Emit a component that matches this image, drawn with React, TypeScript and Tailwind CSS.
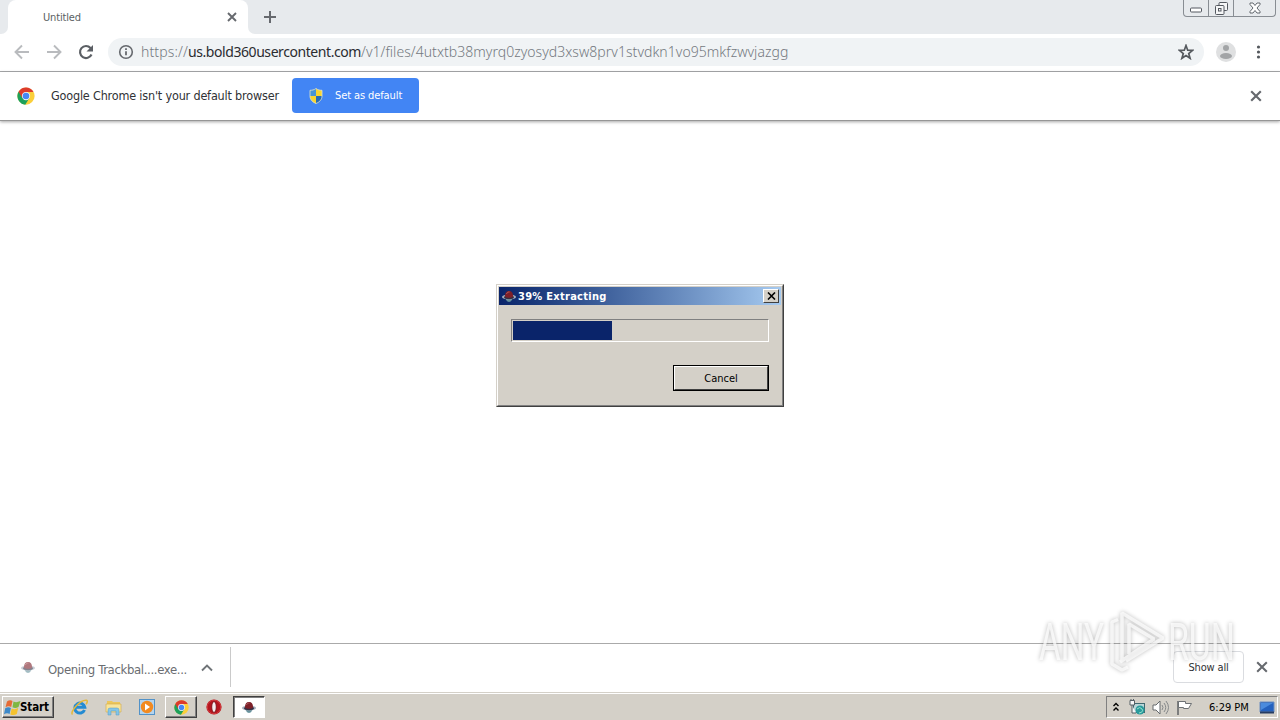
import React from 'react';

const ui = "font-['DejaVu_Sans_Condensed','DejaVu_Sans',sans-serif] [font-stretch:condensed]";
const light = "font-['Noto_Sans','Open_Sans',sans-serif]";

function ChromeLogo({ size }: { size: number }) {
  return (
    <svg width={size} height={size} viewBox="0 0 48 48">
      <circle cx="24" cy="24" r="23" fill="#fbcf3a" />
      <path d="M4.100 12.500A23 23 0 0 0 22 47L33 29.500 24 24z" fill="#1da15a" />
      <path d="M4.100 12.500A23 23 0 0 1 44 13H24L14 29.500z" fill="#dc3b2c" />
      <circle cx="24" cy="24" r="11" fill="#f3f6fb" />
      <circle cx="24" cy="24" r="8.800" fill="#4587f4" />
    </svg>
  );
}

function HatIcon({ faded = false }: { faded?: boolean }) {
  return (
    <svg width="16" height="16" viewBox="0 0 16 16" className={faded ? 'opacity-60' : ''}>
      <path d="M4 10h8l-2 3.200L8 14l-2-.8z" fill="#66929c" />
      <ellipse cx="8" cy="9" rx="7" ry="2.400" fill="#a5aebc" />
      <ellipse cx="8" cy="9.300" rx="5" ry="1.900" fill="#343044" />
      <path d="M4 8.500C4 4.500 5.500 3 8 3s4 1.500 4 5.500c-1.500 1.700-6.500 1.700-8 0z" fill="#7d2029" />
      <path d="M5.500 6C6 4.500 7 4 8.500 4" stroke="#b4605f" fill="none" />
    </svg>
  );
}

function Cross({ size, w = 2 }: { size: number; w?: number }) {
  return (
    <svg width={size} height={size} viewBox="0 0 10 10" stroke="#66696e" strokeWidth={w} fill="none">
      <path d="M1 1l8 8M9 1 1 9" />
    </svg>
  );
}

function Watermark() {
  return (
    <svg
      className="absolute left-[1030px] top-[602px] font-['Roboto','Liberation_Sans',sans-serif] text-[51px] drop-shadow-[0_0_2px_rgba(0,0,0,0.36)]"
      width="212" height="76" viewBox="0 0 212 76" fill="none" strokeLinejoin="bevel"
    >
      <text x="9" y="58" textLength="65" lengthAdjust="spacingAndGlyphs" fill="#fff" fillOpacity=".75">ANY</text>
      <text x="138" y="58" textLength="67" lengthAdjust="spacingAndGlyphs" fill="#fff" fillOpacity=".75">RUN</text>
      <path d="M88 17.500 82 20v42l10 6 6-3M92 58V11l41 25-37 23M99 52V22l25 15-34 23" stroke="#fff" strokeOpacity=".72" strokeWidth="3.500" />
    </svg>
  );
}

function TitleStrip() {
  return (
    <div className="relative flex h-[34px] bg-[#e7eaed]">
      <div className="h-[34px] w-2 bg-white"><div className="h-full rounded-br-[7px] bg-[#e7eaed]" /></div>
      <div className="flex h-[34px] w-[240px] items-center rounded-t-[8px] bg-white pl-[35px] pr-[11px]">
        <span className={`${ui} flex-1 pt-[2px] text-[11px] tracking-[-0.15px] text-[#5b5f63]`}>Untitled</span>
        <Cross size={10} w={1.9} />
      </div>
      <div className="h-[34px] w-2 bg-white"><div className="h-full rounded-bl-[7px] bg-[#e7eaed]" /></div>
      <svg className="ml-[7px] mt-[10px]" width="14" height="14" viewBox="0 0 14 14" stroke="#66696e" strokeWidth="2">
        <path d="M7 1v12M1 7h12" />
      </svg>
      <div className="ml-auto mr-1 flex h-[17px] w-[93px] rounded-b-[4px] border border-t-0 border-[#888d93]">
        <div className="flex w-[25px] justify-center border-r border-[#888d93] pt-[7px]">
          <svg width="12" height="6" viewBox="0 0 12 6"><rect x=".5" y="1" width="11" height="4" rx="1" fill="#fff" stroke="#545960" /></svg>
        </div>
        <div className="flex w-[25px] justify-center border-r border-[#888d93] pt-[2px]">
          <svg width="13" height="13" viewBox="0 0 13 13" fill="#f5f6f7" stroke="#545960">
            <rect x="4" y=".5" width="8.500" height="8" rx="1" /><rect x=".5" y="3.500" width="8.500" height="9" rx="1" /><rect x="3.500" y="6.500" width="2.500" height="2.500" />
          </svg>
        </div>
        <div className="flex flex-1 justify-center pt-[2px]">
          <svg width="12" height="12" viewBox="0 0 12 12"><path d="M1 1h3l2 2.500L8 1h3v1.500L8 6l3 3.500V11H8L6 8.500 4 11H1V9.500L4 6 1 2.500z" fill="#fff" stroke="#545960" strokeWidth=".9" /></svg>
        </div>
      </div>
    </div>
  );
}

function Toolbar() {
  return (
    <div className="flex h-[38px] items-center border-b border-[#a9abad] bg-white pb-px pl-[14px]">
      <svg width="16" height="16" viewBox="0 0 16 16" fill="none" stroke="#b9bbbe" strokeWidth="1.900"><path d="M15 8H2M8 1.500 1.500 8 8 14.500" /></svg>
      <svg className="ml-4" width="16" height="16" viewBox="0 0 16 16" fill="none" stroke="#b9bbbe" strokeWidth="1.900"><path d="M1 8h13M8 1.500 14.500 8 8 14.500" /></svg>
      <svg className="ml-4" width="16" height="16" viewBox="0 0 16 16" fill="none"><path d="M13.500 10.500A6 6 0 1 1 12.500 4L14 5.700" stroke="#5b5f64" strokeWidth="2.200" /><path d="M15 1v6.500H8.500z" fill="#5b5f64" /></svg>
      <div className="ml-[14px] flex h-[28px] w-[1096px] items-center rounded-full bg-[#f0f3f5] pl-[10px] pr-[10px]">
        <svg width="16" height="16" viewBox="0 0 16 16" fill="none" stroke="#66696e" strokeWidth="1.600"><circle cx="8" cy="8" r="6.300" /><path d="M8 7.200v4M8 4.300v1.600" strokeWidth="1.800" /></svg>
        <span className={`${light} ml-[7px] flex-1 whitespace-nowrap text-[14px] font-light leading-5 text-[#74797f]`}>
          <span className="tracking-[0.13px]">https://</span><span className="font-normal tracking-[-0.43px] text-[#2b2c30]">us.bold360usercontent.com</span><span className="tracking-[0.04px]">/v1/files/4utxtb38myrq0zyosyd3xsw8prv1stvdkn1vo95mkfzwvjazgg</span>
        </span>
        <svg width="16" height="16" viewBox="0 0 16 16" fill="none" stroke="#55595e" strokeWidth="1.700"><path d="m8 1.500 1.700 4.700 4.900.2-3.900 3.100 1.400 4.800L8 11.500l-4.100 2.800 1.400-4.800-3.900-3.100 4.900-.2z" /></svg>
      </div>
      <svg className="ml-3" width="20" height="20" viewBox="0 0 20 20"><circle cx="10" cy="10" r="10" fill="#dfe0e1" /><circle cx="10" cy="6" r="3" fill="#a2a4a6" /><ellipse cx="10" cy="14" rx="6" ry="3" fill="#a2a4a6" /></svg>
      <svg className="ml-[20px]" width="5" height="16" viewBox="0 0 5 16" fill="#54585d"><circle cx="2.500" cy="3" r="1.600" /><circle cx="2.500" cy="8" r="1.600" /><circle cx="2.500" cy="13" r="1.600" /></svg>
    </div>
  );
}

function InfoBar() {
  return (
    <div className="flex h-[49px] items-center border-b border-[#969696] bg-white pb-px pl-[17px] pr-[18px] shadow-[0_1px_3px_rgba(0,0,0,0.35)]">
      <ChromeLogo size={18} />
      <span className={`${ui} ml-4 w-[241px] whitespace-nowrap pt-px text-[12.500px] tracking-[-0.18px] text-[#303235]`}>Google Chrome isn't your default browser</span>
      <div className="flex h-[35px] w-[127px] items-center rounded-[4px] bg-[#4285f4] pl-[17px]">
        <svg width="14" height="16" viewBox="0 0 14 16">
          <path d="M7 .5C5 2 3 2.300 1 2.300V8h6z" fill="#4795d6" />
          <path d="M7 .5c2 1.500 4 1.800 6 1.800V8H7z" fill="#f8d530" /><path d="M1 8h6v7.500C4 14.300 1 12 1 8z" fill="#f8d530" /><path d="M7 8h6c0 4-3 6.300-6 7.500z" fill="#286bb5" />
          <path d="M7 .5c2 1.500 4 1.800 6 1.800V8c0 4-3 6.300-6 7.500C4 14.300 1 12 1 8V2.300c2 0 4-.3 6-1.800z" fill="none" stroke="#e3e6c8" strokeWidth=".8" />
        </svg>
        <span className={`${ui} ml-3 whitespace-nowrap pt-[2px] text-[11px] tracking-[-0.1px] text-white`}>Set as default</span>
      </div>
      <div className="ml-auto"><Cross size={12} w={1.8} /></div>
    </div>
  );
}

function Dialog() {
  return (
    <div className="absolute left-[496px] top-[284px] h-[123px] w-[288px] border border-b-[#404040] border-l-[#d4d0c8] border-r-[#404040] border-t-[#d4d0c8] bg-[#d4d0c8]">
      <div className="h-full border border-b-[#808080] border-l-white border-r-[#808080] border-t-white p-px">
        <div className="flex h-[18px] items-center bg-gradient-to-r from-[#0a246a] to-[#a6caf0] pl-[2px] pr-[2px]">
          <HatIcon />
          <span className={`${ui} ml-px flex-1 whitespace-nowrap pt-[2px] text-[11px] font-bold tracking-[0.28px] text-white`}>39% Extracting</span>
          <div className="flex h-[14px] w-4 items-center justify-center border border-b-[#404040] border-l-white border-r-[#404040] border-t-white bg-[#d4d0c8]">
            <svg width="9" height="8" viewBox="0 0 9 8" stroke="#000" strokeWidth="1.600"><path d="m1 .5 7 7M8 .5l-7 7" /></svg>
          </div>
        </div>
        <div className="ml-3 mt-[14px] h-[23px] w-[258px] border border-b-white border-l-[#808080] border-r-white border-t-[#808080] p-px">
          <div className="h-full w-[99px] bg-[#0a246a]" />
        </div>
        <div className="ml-[174px] mt-[23px] h-[26px] w-[96px] border border-black">
          <div className={`${ui} flex h-full items-center justify-center border border-b-[#404040] border-l-white border-r-[#404040] border-t-white pt-[2px] text-[11px] text-black`}>Cancel</div>
        </div>
      </div>
    </div>
  );
}

function Shelf() {
  return (
    <div className="flex h-[49px] items-center border-t border-[#aaaaaa] bg-white pb-[2px]">
      <div className="flex h-10 w-[231px] items-center border-r border-[#cacaca] pl-5 pt-1">
        <div className="-mt-1"><HatIcon faded /></div>
        <span className={`${ui} ml-3 w-[153px] whitespace-nowrap pt-px text-[13px] tracking-[-0.35px] text-[#6a6d71]`}>Opening Trackbal....exe...</span>
        <svg className="-mt-[2px]" width="12" height="8" viewBox="0 0 12 8" fill="none" stroke="#707478" strokeWidth="1.900"><path d="m1 6.500 5-5 5 5" /></svg>
      </div>
      <div className={`${ui} ml-auto mr-3 flex h-8 w-[71px] items-center justify-center rounded-[4px] border border-[#dadce0] pt-[2px] text-[11px] tracking-[-0.15px] text-[#303235]`}>Show all</div>
      <div className="mr-3"><Cross size={12} w={1.700} /></div>
    </div>
  );
}

function Taskbar() {
  const raised = 'border border-b-[#404040] border-l-white border-r-[#404040] border-t-white shadow-[inset_-1px_-1px_0_#808080]';
  return (
    <div className="flex h-7 items-start border-t border-[#d4d0c8] bg-[#d4d0c8] shadow-[inset_0_1px_0_#fff]">
      <div className={`${raised} ml-[2px] mt-[3px] flex h-[22px] w-[52px] items-center pl-px`}>
        <svg width="17" height="17" viewBox="0 0 17 17">
          <path d="M3 2.500c2-1.500 4-1.500 5.500-.5L7.200 8C5.500 7 3.500 7 1.500 8.300z" fill="#e66b35" />
          <path d="M9.500 2.500c2 1 4 .8 7-.5L14.500 8c-2 1.200-4 1.300-6 .3z" fill="#7fb742" />
          <path d="M1.200 9.300c2-1.300 4-1.300 5.700-.3l-1.300 6C4 14 2 14 0 15.200z" fill="#3d89c9" />
          <path d="M7.700 9.500c2 1 4 .8 6.500-.4l-1.400 6c-2 1.200-4 1.300-6.500.3z" fill="#f4c22e" />
        </svg>
        <span className={`${ui} -ml-px pt-px text-[11.500px] font-bold tracking-[-0.1px] text-black`}>Start</span>
      </div>
      <svg className="ml-[17px] mt-[6px]" width="17" height="17" viewBox="0 0 17 17" fill="none">
        <path d="M13.500 11a5 5 0 1 1 .3-2.800H5" stroke="#248bd2" strokeWidth="3" /><path d="M1.500 15.500C-1.500 13 9 .5 15.500 1.200c1.500.5.500 3-.5 4" stroke="#e4b83a" strokeWidth="1.500" />
      </svg>
      <svg className="ml-[17px] mt-[6px]" width="17" height="17" viewBox="0 0 17 17">
        <path d="M2 2h5l1 1h7v9H2z" fill="#ecc65c" /><path d="M1 5h15v8H1z" fill="#f8e49b" stroke="#d2aa48" strokeWidth=".6" /><path d="M3 16v-5q0-2 2-2h7q2 0 2 2v5h-3v-4H6v4z" fill="#83c5e8" stroke="#559bc2" strokeWidth=".5" />
      </svg>
      <svg className="ml-4 mt-[5px]" width="18" height="18" viewBox="0 0 18 18">
        <rect x="1.500" y="1.500" width="15" height="15" fill="#b4d4ee" stroke="#5292c8" /><circle cx="9" cy="9" r="6.200" fill="#f28a20" /><path d="m7 5.500 5 3.500-5 3.500z" fill="#fff" />
      </svg>
      <div className={`${raised} ml-[9px] mt-[3px] flex h-[22px] w-8 items-center justify-center`}><ChromeLogo size={15} /></div>
      <svg className="ml-[9px] mt-[6px]" width="16" height="16" viewBox="0 0 16 16"><circle cx="8" cy="8" r="7.600" fill="#b5161e" /><circle cx="8" cy="8" r="6.800" fill="none" stroke="#dc4b4c" strokeWidth=".7" /><ellipse cx="8" cy="8" rx="2.300" ry="5.500" fill="#f4eeee" stroke="#80131a" /></svg>
      <div className="ml-[11px] mt-[3px] flex h-[22px] w-8 items-center justify-center border border-b-white border-l-[#404040] border-r-white border-t-[#404040] bg-white shadow-[inset_1px_1px_0_#808080]"><HatIcon /></div>
      <div className="ml-auto mr-[2px] mt-[3px] flex h-[22px] w-[172px] items-center border border-b-white border-l-[#808080] border-r-white border-t-[#808080] pl-[5px]">
        <svg width="8" height="10" viewBox="0 0 8 10" fill="none" stroke="#000" strokeWidth="1.400"><path d="m1.500 4 2.500-2.500L6.500 4M1.500 8.500 4 6l2.500 2.500" /></svg>
        <svg className="ml-[9px]" width="16" height="17" viewBox="0 0 16 17">
          <rect x="4.500" y="4.500" width="11" height="9" fill="#b9d6d8" stroke="#3f6870" /><circle cx="11" cy="11" r="4.500" fill="#299b9c" /><path d="M8 10q3-3 5 0t-3 4" stroke="#9be2cd" fill="none" /><path d="M1 1.500h4.500V6H1zM3 6v8h4M2 0v2M4.500 0v2" fill="#f7f7f7" stroke="#566066" />
        </svg>
        <svg className="ml-[7px]" width="18" height="17" viewBox="0 0 18 17" fill="none" stroke="#85888a">
          <path d="M1 6h3l4-4v13l-4-4H1z" fill="#fff" stroke="#666a6d" /><path d="M10 6q2 2.500 0 5M12 4q3.500 4.500 0 9M14 2q5 6.500 0 13" />
        </svg>
        <svg className="ml-[6px]" width="17" height="17" viewBox="0 0 17 17"><path d="M2 2v14" stroke="#606366" strokeWidth="1.500" /><path d="M2.500 2.500h7v2h6l-3 5h-5v-1h-5z" fill="#fff" stroke="#6d7174" /></svg>
        <span className={`${ui} ml-4 w-[50px] whitespace-nowrap pt-[2px] text-[11px] text-black`}>6:29 PM</span>
        <svg width="16" height="13" viewBox="0 0 16 13"><path d="M1 1h14v10H1z" fill="#2461be" stroke="#6c8fc0" /><path d="M2 2h12L2 9z" fill="#4b8bdd" /><path d="M1 11.500h14" stroke="#263c62" strokeWidth="2" /></svg>
      </div>
    </div>
  );
}

export default function App() {
  return (
    <div className="relative flex h-[720px] w-[1280px] flex-col overflow-hidden bg-white">
      <TitleStrip />
      <Toolbar />
      <InfoBar />
      <main className="flex-1" />
      <Shelf />
      <Taskbar />
      <Dialog />
      <Watermark />
    </div>
  );
}
